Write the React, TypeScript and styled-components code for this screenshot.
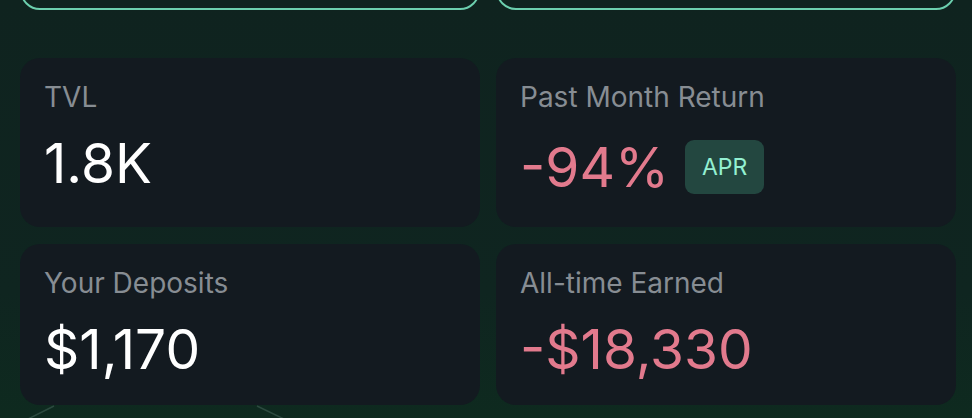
import React, { FunctionComponent } from 'react';
import styled, { createGlobalStyle } from 'styled-components';

const GlobalStyle = createGlobalStyle`
  html, body {
    margin: 0;
    padding: 0;
    background: #0f231f;
    overflow: hidden;
  }
  body {
    font-family: "Inter", "Noto Sans", sans-serif;
    -webkit-font-smoothing: antialiased;
  }
`;

const Page = styled.div`
  width: 972px;
  height: 418px;
  box-sizing: border-box;
  padding: 0 16px 0 20px;
  background: linear-gradient(180deg, #0f231f 0%, #0f2520 70%, #0e2a1f 100%);
  overflow: hidden;
`;

const Grid = styled.div`
  display: grid;
  grid-template-columns: 1fr 1fr;
  column-gap: 16px;
  row-gap: 17px;
`;

const TabRow = styled(Grid)`
  margin-top: -70px;
  margin-bottom: 48px;
`;

const OutlineBox = styled.div`
  height: 80px;
  box-sizing: border-box;
  border: 2px solid #6ccfae;
  border-radius: 20px;
`;

const Card = styled.div`
  background: #131a20;
  border-radius: 20px;
  padding: 23px 24px 33px;
  display: flex;
  flex-direction: column;
`;

const Label = styled.div`
  font-size: 28px;
  line-height: 32px;
  color: #878d93;
  font-weight: 400;
`;

const ValueRow = styled.div`
  margin-top: 27px;
  display: flex;
  align-items: center;
  gap: 16px;
`;

const Value = styled.div<{ $negative?: boolean }>`
  font-size: 55px;
  line-height: 46px;
  font-weight: 400;
  color: ${(p) => (p.$negative ? '#e27a8d' : '#ffffff')};
`;

const Badge = styled.div`
  height: 54px;
  box-sizing: border-box;
  padding: 0 17px;
  display: flex;
  align-items: center;
  border-radius: 9px;
  background: #234740;
  color: #93f0d2;
  font-size: 23px;
  font-weight: 400;
`;

const Decoration = styled.svg`
  display: block;
  margin-left: -20px;
`;

interface StatProps {
  label: string;
  value: string;
  negative?: boolean;
  badge?: string;
}

const Stat: FunctionComponent<StatProps> = ({ label, value, negative, badge }) => (
  <Card>
    <Label>{label}</Label>
    <ValueRow>
      <Value $negative={negative}>{value}</Value>
      {badge && <Badge>{badge}</Badge>}
    </ValueRow>
  </Card>
);

const App: FunctionComponent = () => (
  <>
    <GlobalStyle />
    <Page>
      <TabRow>
        <OutlineBox />
        <OutlineBox />
      </TabRow>
      <Grid>
        <Stat label="TVL" value="1.8K" />
        <Stat label="Past Month Return" value="-94%" negative badge="APR" />
        <Stat label="Your Deposits" value="$1,170" />
        <Stat label="All-time Earned" value="-$18,330" negative />
      </Grid>
      <Decoration width="320" height="20" viewBox="0 0 320 20">
        <path d="M54 1 L28 14" stroke="#2c4a3f" strokeWidth="1.5" fill="none" />
        <path d="M257 1 L284 14" stroke="#2c4a3f" strokeWidth="1.5" fill="none" />
      </Decoration>
    </Page>
  </>
);

export default App;
